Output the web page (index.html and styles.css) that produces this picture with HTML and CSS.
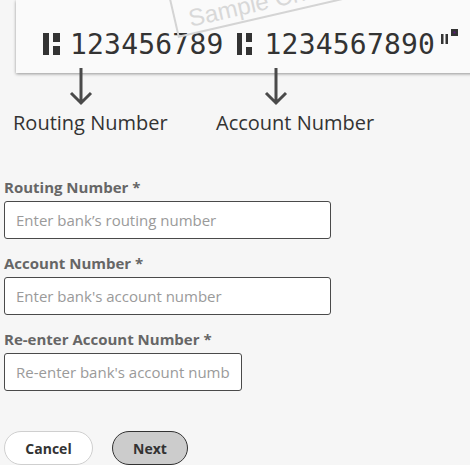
FILE: index.html
```html
<!DOCTYPE html>
<html lang="en">
<head>
<meta charset="utf-8">
<title>Bank account</title>
<link rel="stylesheet" href="styles.css">
</head>
<body>
<div class="page">
  <div class="check">
    <div class="stamp"><span>Sample Check</span></div>
    <div class="micr">
      <svg class="sym sym-transit" width="17" height="22" viewBox="0 0 17 22"><rect x="0" y="0" width="6" height="22"/><rect x="10" y="0" width="7" height="9"/><rect x="10" y="13" width="7" height="9"/></svg>
      <span class="digits d1">123456789</span>
      <svg class="sym sym-transit2" width="15" height="22" viewBox="0 0 15 22"><rect x="0" y="0" width="5" height="22"/><rect x="9" y="0" width="6" height="9"/><rect x="9" y="14" width="6" height="8"/></svg>
      <span class="digits d2">1234567890</span>
      <svg class="sym sym-onus" width="18" height="15" viewBox="0 0 18 15"><rect x="0" y="5" width="2.5" height="10"/><rect x="4.5" y="5" width="2.5" height="10"/><rect x="10" y="0" width="7" height="7"/><rect x="12.5" y="2.5" width="2" height="2" fill="#5a1a7a"/></svg>
    </div>
  </div>

  <div class="callouts">
    <div class="callout c1">
      <svg class="arrow" width="24" height="38" viewBox="0 0 24 38"><path d="M12 0 V35 M2 25 L12 35 L22 25" fill="none" stroke="#4a4a4a" stroke-width="3"/></svg>
      <div class="callout-label">Routing Number</div>
    </div>
    <div class="callout c2">
      <svg class="arrow" width="24" height="38" viewBox="0 0 24 38"><path d="M12 0 V35 M2 25 L12 35 L22 25" fill="none" stroke="#4a4a4a" stroke-width="3"/></svg>
      <div class="callout-label">Account Number</div>
    </div>
  </div>

  <form class="form">
    <label class="field-label" for="routing">Routing Number *</label>
    <input class="field" id="routing" type="text" placeholder="Enter bank’s routing number">
    <label class="field-label" for="account">Account Number *</label>
    <input class="field" id="account" type="text" placeholder="Enter bank's account number">
    <label class="field-label" for="reaccount">Re-enter Account Number *</label>
    <input class="field field-short" id="reaccount" type="text" placeholder="Re-enter bank's account number">
    <div class="actions">
      <button type="button" class="btn btn-cancel">Cancel</button>
      <button type="button" class="btn btn-next">Next</button>
    </div>
  </form>
</div>
</body>
</html>
```

FILE: styles.css
```css
* { box-sizing: border-box; }

html, body {
  margin: 0;
  padding: 0;
  background: #f6f6f6;
  overflow: hidden;
  font-family: "Open Sans", "Liberation Sans", sans-serif;
}

.page {
  width: 470px;
  height: 465px;
  overflow: hidden;
}

.check {
  position: relative;
  margin-left: 16px;
  width: 500px;
  height: 73px;
  background: #fafafa;
  box-shadow: 0 1px 3px rgba(0, 0, 0, 0.4);
  padding-top: 33px;
  padding-left: 27px;
  overflow: hidden;
}

.stamp {
  position: absolute;
  left: 162px;
  top: -12px;
  width: 230px;
  height: 50px;
  border: 2px solid #d4d4d4;
  transform: rotate(-13deg);
  transform-origin: left bottom;
  padding-left: 13px;
  display: flex;
  align-items: flex-end;
}

.stamp span {
  font-family: "Liberation Sans", sans-serif;
  font-size: 24px;
  line-height: 28px;
  color: #d8d8d8;
  padding-bottom: 0;
}

.micr {
  display: flex;
  align-items: flex-start;
  height: 22px;
}

.sym { fill: #333; flex: none; }

.digits {
  font-family: "DejaVu Sans Mono", monospace;
  font-size: 28px;
  line-height: 22px;
  margin-top: 1px;
  color: #333;
  letter-spacing: 0.2px;
  white-space: nowrap;
}

.d1 { margin-left: 10px; }
.sym-transit2 { margin-left: 13px; }
.d2 { margin-left: 13px; }
.sym-onus { margin-left: 6px; margin-top: -4px; }

.callouts {
  position: relative;
  z-index: 1;
  display: grid;
  grid-template-columns: 203px auto;
  padding-left: 13px;
  margin-top: -5px;
}

.callout {
  display: flex;
  flex-direction: column;
}

.arrow { display: block; }
.c1 .arrow { margin-left: 56px; }
.c2 .arrow { margin-left: 48px; }

.callout-label {
  margin-top: 3px;
  font-size: 20px;
  line-height: 27px;
  color: #333;
  white-space: nowrap;
}

.form {
  display: flex;
  flex-direction: column;
  align-items: flex-start;
  padding: 0 4px;
  margin-top: 41px;
}

.field-label {
  font-size: 15px;
  font-weight: 700;
  line-height: 20px;
  color: #666;
}

.field {
  margin-top: 4px;
  margin-bottom: 14px;
  width: 327px;
  height: 38px;
  border: 1px solid #4a4a4a;
  border-radius: 3px;
  background: #fff;
  padding: 0 11px;
  font-family: "Open Sans", sans-serif;
  font-size: 15px;
  color: #333;
  outline: none;
}

.field::placeholder { color: #9a9a9a; }

.field-short { width: 238px; margin-bottom: 0; }

.actions {
  display: flex;
  gap: 19px;
  margin-top: 40px;
}

.btn {
  height: 34px;
  border-radius: 17px;
  font-family: "Open Sans", sans-serif;
  font-size: 14px;
  font-weight: 700;
  color: #333;
  display: flex;
  align-items: center;
  justify-content: center;
  padding: 0;
}

.btn-cancel {
  width: 89px;
  background: #fff;
  border: 1px solid #cfcfcf;
}

.btn-next {
  width: 76px;
  background: #cccccc;
  border: 1.5px solid #333;
}
```
